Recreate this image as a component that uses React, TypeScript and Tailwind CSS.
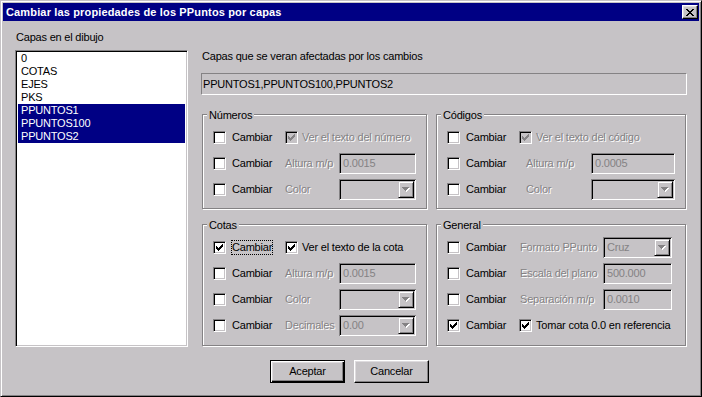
import React from "react";

const DIS = "text-[#848284] [text-shadow:1px_1px_0_#fff]";

function Check({ checked = false, disabled = false }: { checked?: boolean; disabled?: boolean }) {
  const fill = disabled ? "#848284" : "#000";
  return (
    <span
      className={
        "relative inline-block w-[13px] h-[13px] shrink-0 border border-t-[#848284] border-l-[#848284] border-r-white border-b-white shadow-[inset_1px_1px_0_#000,inset_-1px_-1px_0_#c6c3c6] " +
        (disabled ? "bg-[#c6c3c6]" : "bg-white")
      }
    >
      {checked && (
        <svg width="7" height="7" viewBox="0 0 7 7" className="absolute left-[2px] top-[2px]" shapeRendering="crispEdges">
          <rect x="6" y="0" width="1" height="1" fill={fill} />
          <rect x="5" y="1" width="2" height="1" fill={fill} />
          <rect x="0" y="2" width="1" height="1" fill={fill} />
          <rect x="4" y="2" width="3" height="1" fill={fill} />
          <rect x="0" y="3" width="2" height="1" fill={fill} />
          <rect x="3" y="3" width="3" height="1" fill={fill} />
          <rect x="0" y="4" width="5" height="1" fill={fill} />
          <rect x="1" y="5" width="3" height="1" fill={fill} />
          <rect x="2" y="6" width="1" height="1" fill={fill} />
        </svg>
      )}
    </span>
  );
}

function Cambiar({ checked = false, focus = false }: { checked?: boolean; focus?: boolean }) {
  return (
    <div className="flex items-center w-[72px] shrink-0">
      <Check checked={checked} />
      <span className={focus ? "ml-[5px] border border-dotted border-black leading-[13px] -my-[1px]" : "ml-[6px]"}>Cambiar</span>
    </div>
  );
}

function Field({ w, value }: { w: string; value: string }) {
  return (
    <div
      className={
        "h-[21px] shrink-0 flex items-center pl-[3px] border border-t-[#848284] border-l-[#848284] border-r-white border-b-white shadow-[inset_1px_1px_0_#000,inset_-1px_-1px_0_#c6c3c6] bg-[#c6c3c6] text-[#848284] " +
        w
      }
    >
      {value}
    </div>
  );
}

function Arrow({ disabled = true }: { disabled?: boolean }) {
  const f = disabled ? "#848284" : "#000";
  return (
    <svg width="8" height="5" viewBox="0 0 8 5" shapeRendering="crispEdges">
      {disabled && (
        <g fill="#fff">
          <rect x="1" y="1" width="7" height="1" />
          <rect x="2" y="2" width="5" height="1" />
          <rect x="3" y="3" width="3" height="1" />
          <rect x="4" y="4" width="1" height="1" />
        </g>
      )}
      <g fill={f}>
        <rect x="0" y="0" width="7" height="1" />
        <rect x="1" y="1" width="5" height="1" />
        <rect x="2" y="2" width="3" height="1" />
        <rect x="3" y="3" width="1" height="1" />
      </g>
    </svg>
  );
}

function Combo({ w, value = "" }: { w: string; value?: string }) {
  return (
    <div
      className={
        "h-[21px] shrink-0 flex items-stretch p-[2px] border-0 shadow-[inset_1px_1px_0_#848284,inset_-1px_-1px_0_#fff,inset_2px_2px_0_#000,inset_-2px_-2px_0_#c6c3c6] bg-[#c6c3c6] text-[#848284] " +
        w
      }
    >
      <div className="flex-1 flex items-center pl-[2px]">{value}</div>
      <div className="w-[16px] flex items-center justify-center pt-[1px] border border-t-[#c6c3c6] border-l-[#c6c3c6] border-r-black border-b-black shadow-[inset_1px_1px_0_#fff,inset_-1px_-1px_0_#848284]">
        <Arrow />
      </div>
    </div>
  );
}

function Group({ title, h, w, legendW, children }: { title: string; h: string; w: string; legendW?: string; children: React.ReactNode }) {
  return (
    <div
      className={
        "relative shrink-0 border border-[#848284] shadow-[1px_1px_0_#fff,inset_1px_1px_0_#fff] pt-[9px] pl-[10px] " +
        h +
        " " +
        w
      }
    >
      <span className="absolute left-[4px] -top-[6px] bg-[#c6c3c6] px-[2px] leading-[13px]">{title}</span>
      {children}
    </div>
  );
}

function Row({ children }: { children: React.ReactNode }) {
  return <div className="h-[26px] flex items-center">{children}</div>;
}

function Btn({ label, def = false }: { label: string; def?: boolean }) {
  return def ? (
    <div className="w-[75px] h-[23px] border border-black shadow-[inset_1px_1px_0_#fff,inset_-1px_-1px_0_#000,inset_-2px_-2px_0_#848284,inset_2px_2px_0_#dedbde] flex items-center justify-center">
      {label}
    </div>
  ) : (
    <div className="w-[75px] h-[23px] border border-t-white border-l-white border-r-black border-b-black shadow-[inset_-1px_-1px_0_#848284,inset_1px_1px_0_#dedbde] flex items-center justify-center">
      {label}
    </div>
  );
}

export default function App() {
  const items = ["0", "COTAS", "EJES", "PKS", "PPUNTOS1", "PPUNTOS100", "PPUNTOS2"];
  return (
    <div className="w-[702px] h-[397px] bg-[#c6c3c6] text-black text-[11px] leading-[13px] tracking-[-0.2px] font-['Liberation_Sans',Arial,sans-serif] border border-t-[#c6c3c6] border-l-[#c6c3c6] border-r-black border-b-black shadow-[inset_1px_1px_0_#fff,inset_-1px_-1px_0_#848284] p-[2px] flex flex-col overflow-hidden select-none">
      {/* title bar */}
      <div className="h-[18px] bg-[#000084] flex items-center justify-between pl-[3px] pr-[1px]">
        <span className="text-white font-bold text-[11px] tracking-[0.15px]">Cambiar las propiedades de los PPuntos por capas</span>
        <div className="w-[16px] h-[14px] border border-t-white border-l-white border-r-black border-b-black shadow-[inset_-1px_-1px_0_#848284,inset_1px_1px_0_#dedbde] bg-[#c6c3c6] flex items-center justify-center">
          <svg width="8" height="7" viewBox="0 0 8 7" shapeRendering="crispEdges" fill="#000">
            <rect x="0" y="0" width="2" height="1" />
            <rect x="6" y="0" width="2" height="1" />
            <rect x="1" y="1" width="2" height="1" />
            <rect x="5" y="1" width="2" height="1" />
            <rect x="2" y="2" width="4" height="1" />
            <rect x="3" y="3" width="2" height="1" />
            <rect x="2" y="4" width="4" height="1" />
            <rect x="1" y="5" width="2" height="1" />
            <rect x="5" y="5" width="2" height="1" />
            <rect x="0" y="6" width="2" height="1" />
            <rect x="6" y="6" width="2" height="1" />
          </svg>
        </div>
      </div>

      {/* body */}
      <div className="flex pl-[12px] pt-[10px]">
        {/* left column */}
        <div className="w-[173px] shrink-0 flex flex-col">
          <div className="pl-[1px] h-[13px]">Capas en el dibujo</div>
          <div className="mt-[6px] h-[297px] bg-white border border-t-[#848284] border-l-[#848284] border-r-white border-b-white shadow-[inset_1px_1px_0_#000,inset_-1px_-1px_0_#c6c3c6] p-[2px] pt-[1px] flex flex-col">
            {items.map((it, i) => (
              <div key={it} className={"h-[13px] pl-[3px] " + (i >= 4 ? "bg-[#000084] text-white" : "")}>
                {it}
              </div>
            ))}
          </div>
        </div>

        {/* right column */}
        <div className="ml-[13px] w-[486px] flex flex-col">
          <div className="mt-[19px] pl-[1px] h-[13px]">Capas que se veran afectadas por los cambios</div>
          <div className="mt-[10px] h-[22px] flex items-center pl-[1px] pt-[1px] border border-t-[#848284] border-l-[#848284] border-r-white border-b-white">
            PPUNTOS1,PPUNTOS100,PPUNTOS2
          </div>

          <div className="mt-[19px] ml-[1px] flex gap-[9px]">
            <Group title="Números" h="h-[95px]" w="w-[225px]">
              <Row>
                <Cambiar />
                <Check checked disabled />
                <span className={"ml-[4px] " + DIS}>Ver el texto del número</span>
              </Row>
              <Row>
                <Cambiar />
                <span className={"w-[54px] shrink-0 " + DIS}>Altura m/p</span>
                <Field w="w-[77px]" value="0.0015" />
              </Row>
              <Row>
                <Cambiar />
                <span className={"w-[54px] shrink-0 " + DIS}>Color</span>
                <Combo w="w-[77px]" />
              </Row>
            </Group>
            <Group title="Códigos" h="h-[95px]" w="w-[250px]">
              <Row>
                <Cambiar />
                <Check checked disabled />
                <span className={"ml-[4px] " + DIS}>Ver el texto del código</span>
              </Row>
              <Row>
                <Cambiar />
                <span className={"ml-[7px] w-[65px] shrink-0 " + DIS}>Altura m/p</span>
                <Field w="w-[84px]" value="0.0005" />
              </Row>
              <Row>
                <Cambiar />
                <span className={"ml-[7px] w-[65px] shrink-0 " + DIS}>Color</span>
                <Combo w="w-[84px]" />
              </Row>
            </Group>
          </div>

          <div className="mt-[15px] ml-[1px] flex gap-[9px]">
            <Group title="Cotas" h="h-[122px]" w="w-[225px]">
              <Row>
                <Cambiar checked focus />
                <Check checked />
                <span className="ml-[4px]">Ver el texto de la cota</span>
              </Row>
              <Row>
                <Cambiar />
                <span className={"w-[54px] shrink-0 " + DIS}>Altura m/p</span>
                <Field w="w-[77px]" value="0.0015" />
              </Row>
              <Row>
                <Cambiar />
                <span className={"w-[54px] shrink-0 " + DIS}>Color</span>
                <Combo w="w-[77px]" />
              </Row>
              <Row>
                <Cambiar />
                <span className={"w-[54px] shrink-0 " + DIS}>Decimales</span>
                <Combo w="w-[77px]" value="0.00" />
              </Row>
            </Group>
            <Group title="General" h="h-[122px]" w="w-[250px]">
              <Row>
                <Cambiar />
                <span className={"ml-[1px] w-[83px] shrink-0 " + DIS}>Formato PPunto</span>
                <Combo w="w-[69px]" value="Cruz" />
              </Row>
              <Row>
                <Cambiar />
                <span className={"ml-[1px] w-[83px] shrink-0 " + DIS}>Escala del plano</span>
                <Field w="w-[69px]" value="500.000" />
              </Row>
              <Row>
                <Cambiar />
                <span className={"ml-[1px] w-[83px] shrink-0 " + DIS}>Separación m/p</span>
                <Field w="w-[69px]" value="0.0010" />
              </Row>
              <Row>
                <Cambiar checked />
                <Check checked />
                <span className="ml-[4px]">Tomar cota 0.0 en referencia</span>
              </Row>
            </Group>
          </div>
        </div>
      </div>

      {/* buttons */}
      <div className="mt-[13px] pl-[267px] flex gap-[9px]">
        <Btn label="Aceptar" def />
        <Btn label="Cancelar" />
      </div>
    </div>
  );
}
